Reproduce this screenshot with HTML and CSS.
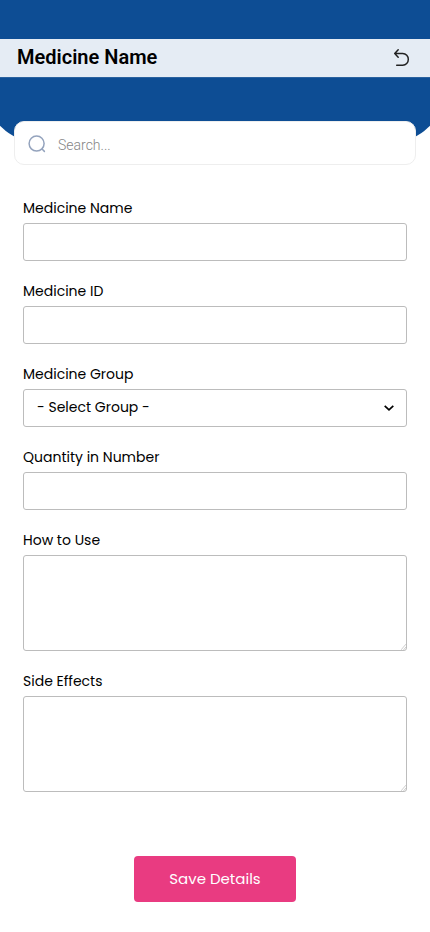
FILE: index.html
```html
<!DOCTYPE html>
<html lang="en">
<head>
<meta charset="utf-8">
<meta name="viewport" content="width=device-width, initial-scale=1">
<title>Medicine Name</title>
<link rel="stylesheet" href="styles.css">
</head>
<body>
<header class="hero">
  <div class="titlebar">
    <h1>Medicine Name</h1>
    <svg class="back" width="18" height="20" viewBox="0 0 18 20" fill="none" stroke="#222" stroke-width="1.5" stroke-linecap="round" stroke-linejoin="round"><path d="M6.2 1.7 2.7 5.5l3.5 3.7M2.7 5.5h8a5.6 5.6 0 0 1 5.6 5.9 5.6 5.6 0 0 1-5.6 5.8H4.7"/></svg>
  </div>
</header>
<div class="search">
  <svg width="18" height="18" viewBox="0 0 18 18" fill="none" stroke="#94a3bd" stroke-width="1.5" stroke-linecap="round"><circle cx="8.6" cy="8.6" r="7.5"/><path d="m14.3 14.3 2.1 2.1"/></svg>
  <span>Search...</span>
</div>
<main class="form">
  <div class="field"><label>Medicine Name</label><div class="input"></div></div>
  <div class="field"><label>Medicine ID</label><div class="input"></div></div>
  <div class="field"><label>Medicine Group</label><div class="input select"><span>- Select Group -</span><svg width="12" height="8" viewBox="0 0 12 8" fill="none" stroke="#000" stroke-width="1.7"><path d="m1.7 1.8 4.3 4 4.3-4"/></svg></div></div>
  <div class="field"><label>Quantity in Number</label><div class="input"></div></div>
  <div class="field"><label>How to Use</label><div class="input area"><svg width="5" height="6" viewBox="0 0 6 7" stroke="#aaa" stroke-width=".7"><path d="m0 7 6-7M3 7l3-3.5"/></svg></div></div>
  <div class="field"><label>Side Effects</label><div class="input area"><svg width="5" height="6" viewBox="0 0 6 7" stroke="#aaa" stroke-width=".7"><path d="m0 7 6-7M3 7l3-3.5"/></svg></div></div>
  <button class="save">Save Details</button>
</main>
</body>
</html>
```
FILE: styles.css
```css
* { box-sizing: border-box; }
body { margin: 0; background: #fff; color: #000; font-family: Poppins, Inter, sans-serif; overflow-x: hidden; }
.hero { height: 142px; margin: 0 -13px; padding: 39px 13px 0; background: #0d4d94; border-radius: 0 0 50px 50px; }
.titlebar { display: flex; align-items: center; justify-content: space-between; height: 38px; padding: 0 20px 0 17px; background: #e5ecf4; box-shadow: 0 1px 0 #2a629f; }
h1 { margin: 0; padding-bottom: 2px; font: 600 20px/34px Roboto, sans-serif; }
.back { display: block; }
.search { position: relative; display: flex; align-items: center; gap: 12px; height: 44px; margin: -21px 14px 0; padding: 2px 13px 0; background: #fff; border: 1px solid #eee; border-radius: 10px; font: 300 14px/20px Roboto, sans-serif; color: #858585; }
.search span { padding-top: 1px; }
.form { display: flex; flex-direction: column; padding: 33px 23px 0; }
.field { margin-bottom: 20px; }
label { display: block; width: max-content; height: 25px; font-size: 14px; line-height: 21px; }
.input { height: 38px; border: 1px solid #bcbcbc; border-radius: 3px; background: #fff; }
.select { display: flex; align-items: center; justify-content: space-between; padding: 0 11px 0 13px; font-size: 14px; }
.select span { padding-bottom: 2px; }
.area { display: flex; align-items: flex-end; justify-content: flex-end; height: 96px; }
.save { align-self: center; width: 162px; height: 46px; margin-top: 44px; padding: 0 0 2px; border: 0; border-radius: 4px; background: #e93b81; color: #fff; font-family: inherit; font-size: 15px; }
```
